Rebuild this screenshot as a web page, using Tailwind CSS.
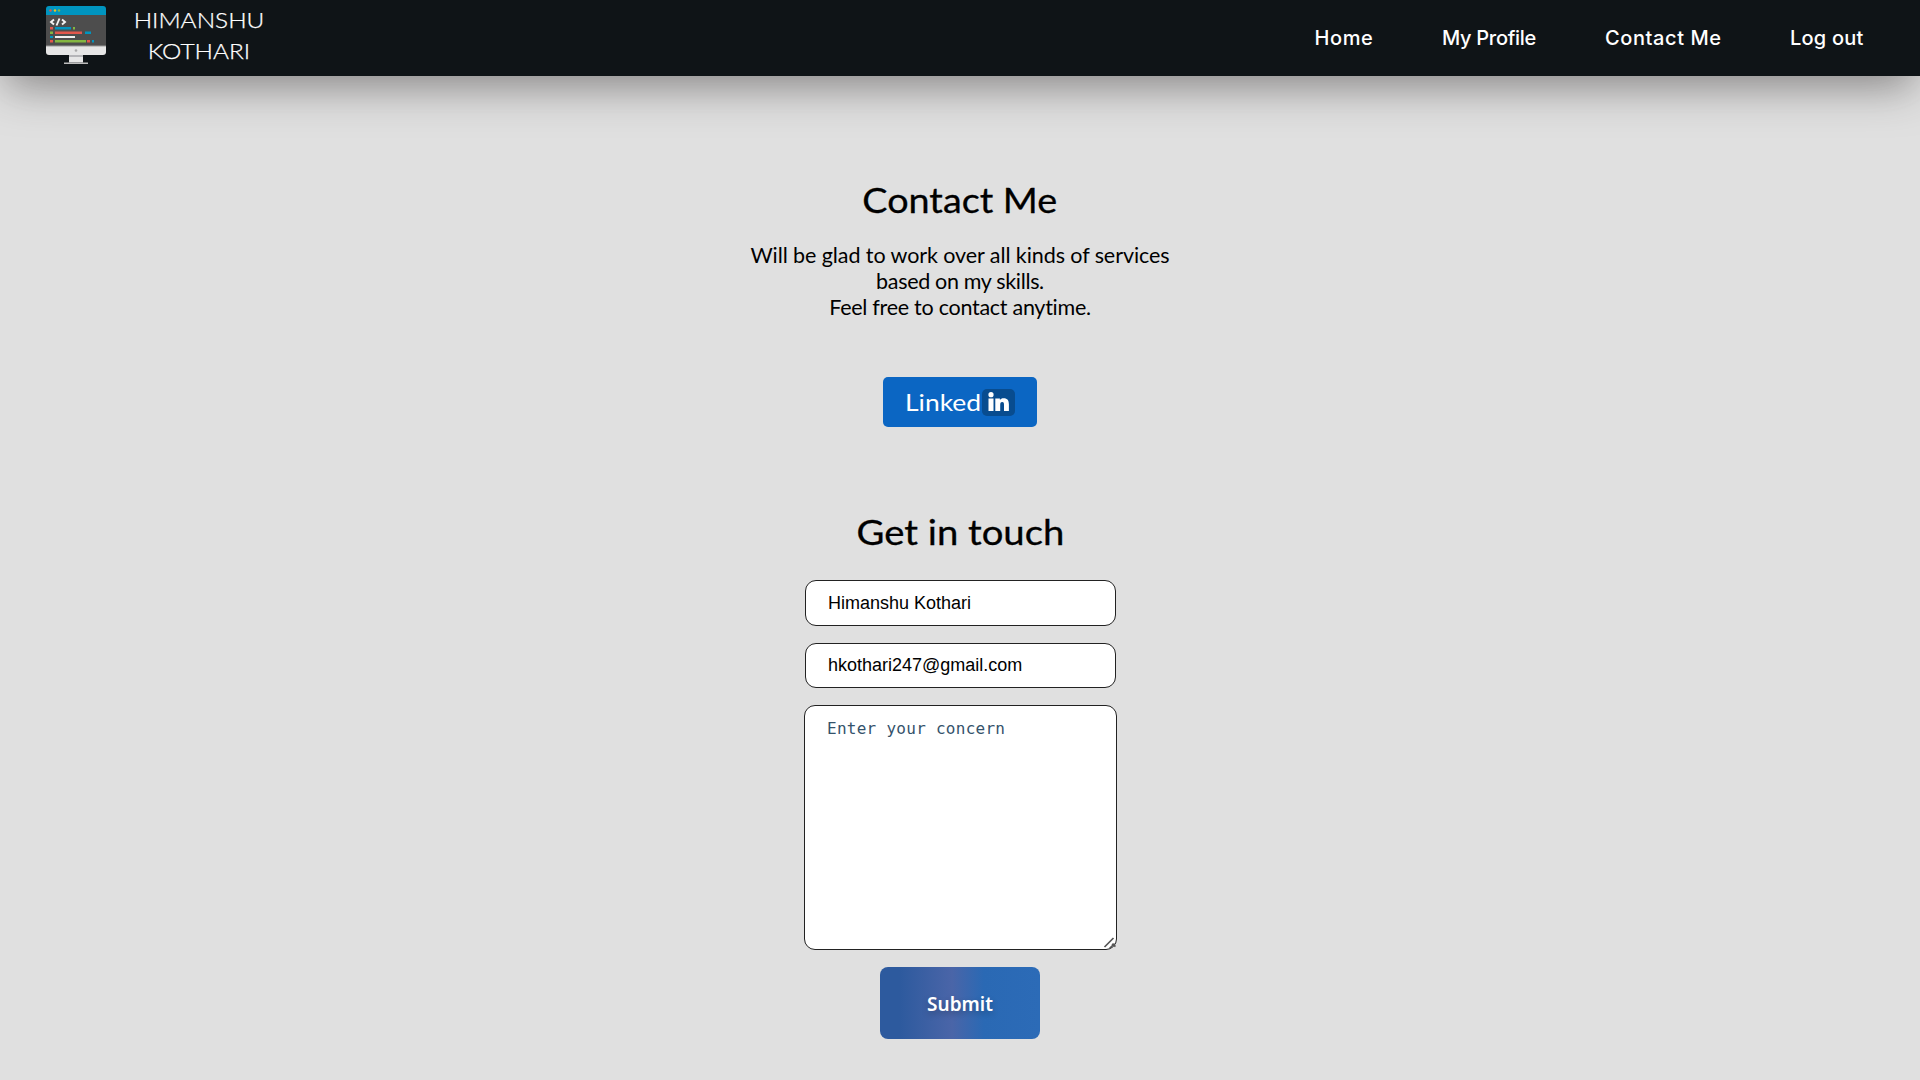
<!DOCTYPE html>
<html lang="en">
<head>
<meta charset="utf-8">
<title>Contact Me</title>
<script src="https://cdn.jsdelivr.net/npm/@tailwindcss/browser@4"></script>
</head>
<body class="bg-[#e0e0e0] h-[1080px] overflow-hidden text-black">
<header class="h-[76px] bg-[#0f1417] flex items-start justify-between shadow-[0_16px_44px_-6px_rgba(50,46,46,0.52)]">
  <div class="flex items-start">
    <svg class="ml-[46px] mt-1.5 h-[59px] w-[60px]" viewBox="0 0 60 59">
      <path fill="#e6e6e6" d="M0 40h60v6q0 3-3 3H3q-3 0-3-3z"/>
      <path fill="#4d4d4d" d="M0 8h60v32H0z"/>
      <path fill="#0095c0" d="M3 0h54q3 0 3 3v6H0V3q0-3 3-3z"/>
      <path fill="#999" d="M0 39.500h60v1H0z"/>
      <path fill="#e6e6e6" d="M23 49h14v7.500H23z"/><path fill="#b5b5b8" d="M23 49h14v2H23z"/>
      <path fill="#bcbcbc" d="M18 56.500h24v1.500H18z"/>
      <circle cx="30" cy="44.500" r="1.300" fill="#aaa"/>
      <g fill="#e2574c"><circle cx="4.500" cy="4.500" r="1.200"/><path d="M4 21h3v2.500H4zM9 25.500h27v2.500H9zM4 34h3v2.500H4zM41 34h3v2.500h-3z"/></g>
      <circle cx="9" cy="4.500" r="1.200" fill="#efc41a"/>
      <g fill="#84b641"><circle cx="13" cy="4.500" r="1.200"/><path d="M27 21h2v2.500h-2zM4 25.500h3v2.500H4zM9 34h31v2.500H9z"/></g>
      <path fill="#0095c0" d="M9 21h16v2.500H9zM39 25.500h6v2.500h-6zM4 30h3v2H4zM46 34h2v2.500h-2z"/>
      <path fill="#f0f0f0" d="M9 30h20v2H9z"/>
      <path fill="none" stroke="#f4f4f4" stroke-width="1.900" d="M8 13.500L5 16l3 2.500M13.500 12.500L10.500 19.500M16 13.500L19 16l-3 2.500"/>
    </svg>
    <div class="ml-[28px] mt-[3.500px] w-[130px] scale-x-[1.11] text-center font-['Lato',sans-serif] font-light text-[22px] leading-[31px] text-white [-webkit-text-stroke:0.25px_white]">HIMANSHU<br>KOTHARI</div>
  </div>
  <nav class="flex gap-[66px] pr-[56px] font-['Inter',sans-serif] font-medium text-[20px] leading-[76px] text-white whitespace-nowrap">
    <a class="w-[61.5px] tracking-[0.6px]">Home</a>
    <a class="w-[97px] tracking-[-0.3px]">My Profile</a>
    <a class="w-[119px] tracking-[0.6px]">Contact Me</a>
    <a class="w-[74px] tracking-[0.2px]">Log out</a>
  </nav>
</header>
<main class="flex flex-col items-center">
  <h1 class="mt-[100px] h-[48px] scale-x-[1.11] font-['Lato',sans-serif] text-[34px] leading-[48px] [-webkit-text-stroke:0.3px_black]">Contact Me</h1>
  <p class="mt-[18px] flex flex-col items-center font-['Lato',sans-serif] text-[21.5px] leading-[26px] whitespace-nowrap">
    <span class="tracking-[-0.08px]">Will be glad to work over all kinds of services</span>
    <span class="tracking-[-0.33px]">based on my skills.</span>
    <span class="tracking-[-0.27px]">Feel free to contact anytime.</span>
  </p>
  <a class="mt-[57px] flex h-[50px] w-[154px] items-center rounded-[5px] bg-[#0b66c3] pl-[22px] text-white">
    <span class="w-[77px] font-['Lato',sans-serif] text-[23px] leading-[49px]"><span class="inline-block origin-left scale-x-[1.15]">Linked</span></span>
    <svg class="h-[27px] w-[33px]" viewBox="0 0 33 27">
      <rect width="33" height="27" rx="5" fill="#084c8f"/>
      <g fill="#fff"><circle cx="9" cy="5.700" r="2.600"/><path d="M6.500 9.500h5V22h-5zM13.300 9.500h4.600v1.500c.7-1.200 2-1.800 3.700-1.800 4 0 5.300 2.300 5.300 6V22h-4.900v-6.100c0-1.700-.2-2.900-1.800-2.900-1.700 0-2 1.300-2 2.900V22h-4.900z"/></g>
    </svg>
  </a>
  <h2 class="mt-[81px] h-[48px] scale-x-[1.125] font-['Lato',sans-serif] text-[34px] leading-[48px] [-webkit-text-stroke:0.3px_black]">Get in touch</h2>
  <form class="mt-[24px] flex w-[313px] flex-col items-center">
    <div class="h-[46px] w-[311px] rounded-[11px] border border-[#222] bg-white pl-[22.500px] font-['Liberation_Sans',sans-serif] text-[18px] leading-[45px]">Himanshu Kothari</div>
    <div class="mt-[17px] h-[45px] w-[311px] rounded-[11px] border border-[#222] bg-white pl-[22.500px] font-['Liberation_Sans',sans-serif] text-[18px] leading-[42px]">hkothari247@gmail.com</div>
    <div class="relative mt-[17px] h-[245px] w-[313px] rounded-[11px] border border-[#222] bg-white pl-[22.500px] pt-[10px] font-['DejaVu_Sans_Mono',monospace] text-[16px] leading-[26px] tracking-[0.27px] text-[#34526b]">Enter your concern
      <svg class="absolute right-[-1px] bottom-[-1px] h-[14px] w-[14px]" viewBox="0 0 14 14"><path d="M1.500 11L10.500 2M6.500 12.500L11.500 7.500M9 8l3.500 2.500" fill="none" stroke="#555" stroke-width="1.700"/></svg>
    </div>
    <div class="mt-[17px] h-[72px] w-[160px] rounded-[8px] bg-[linear-gradient(90deg,#2d5a9e_0%,#2d5a9e_12%,#4a65a8_45%,#2a69b4_65%,#2c6bb7_100%)] text-center font-['Noto_Sans',sans-serif] text-[19px] font-semibold leading-[75px] text-white text-shadow-[0_3px_6px_rgba(0,0,0,0.25)]">Submit</div>
  </form>
</main>
</body>
</html>
